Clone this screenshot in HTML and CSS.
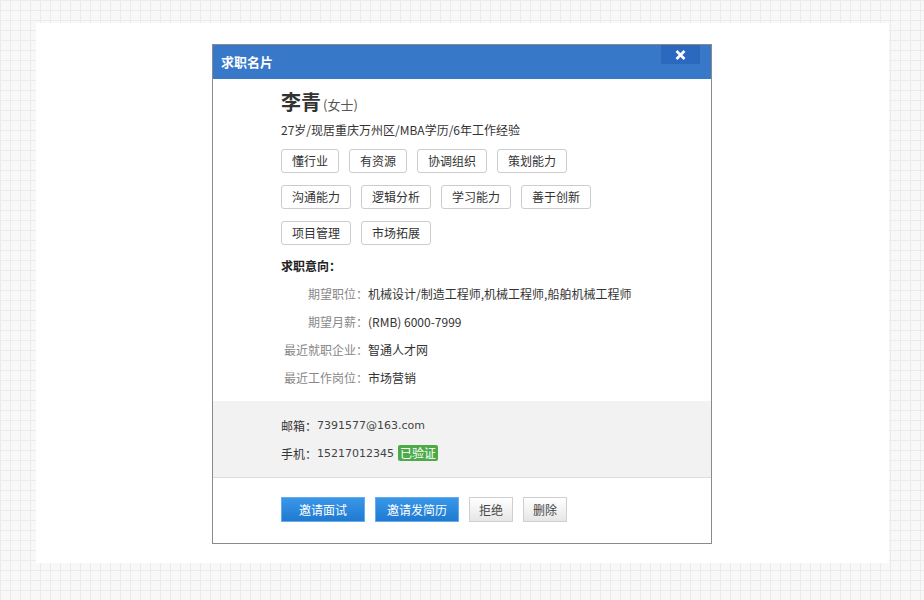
FILE: index.html
```html
<!DOCTYPE html>
<html>
<head>
    <title>求职名片</title>
    <link rel="stylesheet" href="styles.css">
</head>
<body>
    <div class="page">
        <div class="dialog">
            <div class="dialog-header">
                <span class="dialog-title">求职名片</span>
                <a class="close-btn">
                    <svg width="11" height="10" viewBox="0 0 11 10">
                        <path d="M1.5 1 L9.5 9 M9.5 1 L1.5 9" stroke="#ffffff" stroke-width="2.6" fill="none"/>
                    </svg>
                </a>
            </div>

            <div class="profile">
                <div class="name">李青<span class="gender">(女士)</span></div>
                <div class="summary">27岁/现居重庆万州区/MBA学历/6年工作经验</div>

                <div class="tag-row">
                    <span class="tag">懂行业</span>
                    <span class="tag">有资源</span>
                    <span class="tag">协调组织</span>
                    <span class="tag">策划能力</span>
                </div>
                <div class="tag-row">
                    <span class="tag">沟通能力</span>
                    <span class="tag">逻辑分析</span>
                    <span class="tag">学习能力</span>
                    <span class="tag">善于创新</span>
                </div>
                <div class="tag-row">
                    <span class="tag">项目管理</span>
                    <span class="tag">市场拓展</span>
                </div>

                <div class="section-title">求职意向：</div>
                <div class="intent-list">
                    <span class="label">期望职位：</span>
                    <span class="value">机械设计/制造工程师,机械工程师,船舶机械工程师</span>
                    <span class="label">期望月薪：</span>
                    <span class="value">(RMB) 6000-7999</span>
                    <span class="label">最近就职企业：</span>
                    <span class="value">智通人才网</span>
                    <span class="label">最近工作岗位：</span>
                    <span class="value">市场营销</span>
                </div>
            </div>

            <div class="contact">
                <div class="contact-row">邮箱：<span class="num">7391577@163.com</span></div>
                <div class="contact-row">手机：<span class="num">15217012345</span><span class="verified">已验证</span></div>
            </div>

            <div class="actions">
                <button class="btn btn-primary">邀请面试</button>
                <button class="btn btn-primary">邀请发简历</button>
                <button class="btn btn-default">拒绝</button>
                <button class="btn btn-default">删除</button>
            </div>
        </div>
    </div>
</body>
</html>
```

FILE: styles.css
```css
:root {
    --header-blue: #3878c9;
    --close-blue: #2b69bf;
    --border-gray: #8a8a8a;
    --text-color: #333333;
    --label-color: #888888;
    --tag-border: #cccccc;
    --contact-bg: #f2f2f2;
}

html, body {
    margin: 0;
    padding: 0;
}

body {
    font-family: "Noto Sans CJK SC", "Liberation Sans", sans-serif;
    font-size: 12px;
    color: var(--text-color);
    background-color: #f8f8f8;
    background-image:
        linear-gradient(to right, #ebebeb 1px, transparent 1px),
        linear-gradient(to bottom, #ebebeb 1px, transparent 1px);
    background-size: 10px 10px;
    height: 600px;
    overflow: hidden;
    padding-top: 23px;
    box-sizing: border-box;
}

.page {
    background: #ffffff;
    margin-left: 36px;
    width: 853px;
    height: 540px;
    padding: 21px 0 0 176px;
    box-sizing: border-box;
}

.dialog {
    width: 500px;
    height: 500px;
    border: 1px solid var(--border-gray);
    box-sizing: border-box;
    background: #ffffff;
    display: flex;
    flex-direction: column;
}

.dialog-header {
    height: 34px;
    flex: none;
    background: var(--header-blue);
    display: flex;
    align-items: center;
    padding-left: 8px;
    position: relative;
}

.dialog-title {
    color: #ffffff;
    font-size: 13px;
    font-weight: bold;
    margin-top: -1px;
}

.close-btn {
    position: absolute;
    top: 0;
    right: 11px;
    width: 39px;
    height: 19px;
    background: var(--close-blue);
    display: flex;
    align-items: center;
    justify-content: center;
}

.profile {
    padding: 9px 0 0 68px;
}

.name {
    font-size: 20px;
    font-weight: bold;
    line-height: 28px;
    height: 28px;
    color: #333;
}

.gender {
    font-size: 13px;
    font-weight: normal;
    color: #555;
    margin-left: 2px;
}

.summary {
    margin-top: 4px;
    line-height: 20px;
}

.tag-row {
    display: flex;
    gap: 10px;
    margin-top: 9px;
}

.tag-row + .tag-row {
    margin-top: 12px;
}

.tag {
    height: 24px;
    line-height: 22px;
    padding: 0 10px;
    border: 1px solid var(--tag-border);
    border-radius: 3px;
    box-sizing: border-box;
    color: #333;
}

.section-title {
    margin-top: 11px;
    line-height: 20px;
    font-weight: bold;
    color: #222;
}

.intent-list {
    display: grid;
    grid-template-columns: 87px auto;
    margin-top: 4px;
}

.label,
.value {
    line-height: 28px;
    white-space: nowrap;
}

.label {
    color: var(--label-color);
    text-align: right;
}

.value {
    color: #333;
}

.contact {
    margin-top: 9px;
    background: var(--contact-bg);
    border-bottom: 1px solid #dddddd;
    padding: 10px 0 10px 68px;
}

.contact-row {
    height: 28px;
    display: flex;
    align-items: center;
    color: #333;
}

.num {
    font-family: "DejaVu Sans", sans-serif;
    font-size: 11px;
    color: #444;
}

.verified {
    margin-left: 4px;
    background: #4cab48;
    color: #ffffff;
    line-height: 16px;
    padding: 0 2px;
    border-radius: 2px;
}

.actions {
    display: flex;
    gap: 10px;
    padding: 19px 0 0 68px;
}

.btn {
    height: 25px;
    font-family: inherit;
    font-size: 12px;
    padding: 0;
    box-sizing: border-box;
    cursor: pointer;
}

.btn-primary {
    width: 84px;
    color: #ffffff;
    background: linear-gradient(to bottom, #3a97e8, #1f7ad0);
    border: 1px solid #64acee;
}

.btn-default {
    width: 44px;
    color: #444;
    background: linear-gradient(to bottom, #ffffff, #e6e6e6);
    border: 1px solid #cfcfcf;
}
```
